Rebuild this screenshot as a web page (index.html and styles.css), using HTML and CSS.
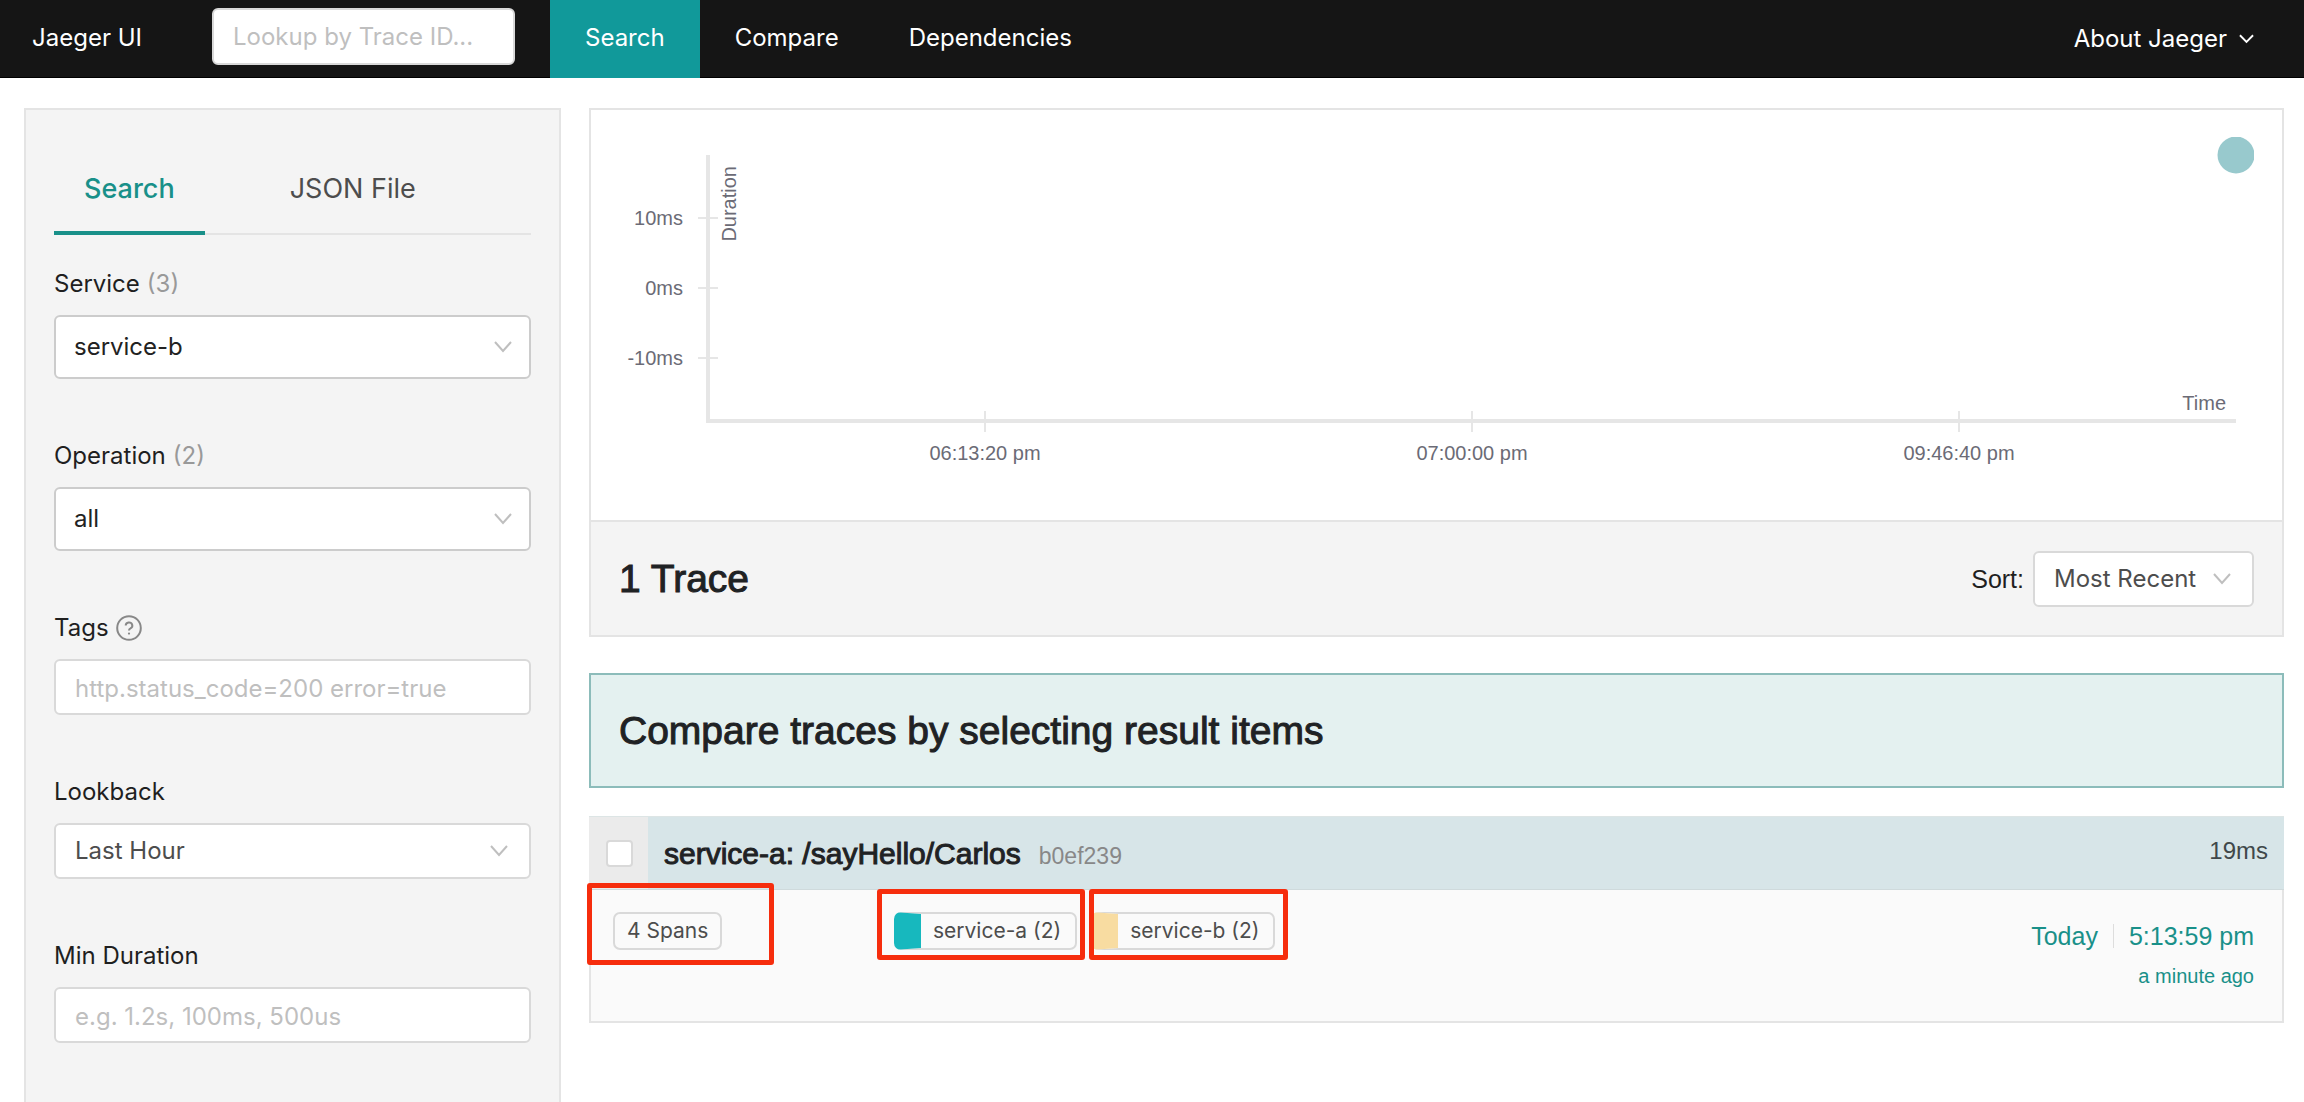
FILE: index.html
```html
<!DOCTYPE html>
<html lang="en">
<head>
<meta charset="utf-8">
<meta name="viewport" content="width=device-width, initial-scale=1">
<title>Jaeger UI</title>
<link rel="stylesheet" href="styles.css">
</head>
<body>
<header class="topbar">
  <a class="brand" href="#">Jaeger UI</a>
  <input class="lookup" type="text" placeholder="Lookup by Trace ID..." aria-label="Lookup by Trace ID">
  <nav class="nav">
    <a class="nav-item active" href="#">Search</a>
    <a class="nav-item" href="#">Compare</a>
    <a class="nav-item" href="#">Dependencies</a>
  </nav>
  <button class="about" type="button">About Jaeger
    <svg class="about-chevron" viewBox="0 0 16 10" aria-hidden="true"><path d="M1 1l7 7 7-7"/></svg>
  </button>
</header>

<div class="page">
  <aside class="sidebar">
    <div class="tabs" role="tablist">
      <button class="tab active" type="button" role="tab" aria-selected="true">Search</button>
      <button class="tab" type="button" role="tab" aria-selected="false">JSON File</button>
    </div>
    <form class="form">
      <div class="field">
        <label for="service">Service <span class="count">(3)</span></label>
        <div class="select tall">
          <select id="service"><option>service-b</option></select>
          <svg class="chevron" viewBox="0 0 18 12" aria-hidden="true"><path d="M1 1l8 9 8-9"/></svg>
        </div>
      </div>
      <div class="field">
        <label for="operation">Operation <span class="count">(2)</span></label>
        <div class="select tall">
          <select id="operation"><option>all</option></select>
          <svg class="chevron" viewBox="0 0 18 12" aria-hidden="true"><path d="M1 1l8 9 8-9"/></svg>
        </div>
      </div>
      <div class="field">
        <label for="tags">Tags
          <svg class="help" viewBox="0 0 26 26" aria-hidden="true"><circle cx="13" cy="13" r="11.8"/><path d="M9.7 10.6a3.3 3.1 0 1 1 4.8 2.8c-1 .5-1.5 1-1.5 2.2"/><circle class="help-dot" cx="13" cy="18.6" r="1.1"/></svg>
        </label>
        <input class="text" id="tags" type="text" placeholder="http.status_code=200 error=true">
      </div>
      <div class="field">
        <label for="lookback">Lookback</label>
        <div class="select">
          <select id="lookback"><option>Last Hour</option></select>
          <svg class="chevron" viewBox="0 0 18 12" aria-hidden="true"><path d="M1 1l8 9 8-9"/></svg>
        </div>
      </div>
      <div class="field">
        <label for="min">Min Duration</label>
        <input class="text" id="min" type="text" placeholder="e.g. 1.2s, 100ms, 500us">
      </div>
    </form>
  </aside>

  <main class="results">
    <section class="overview">
      <svg class="chart" viewBox="0 0 1691 410" role="img" aria-label="Trace duration over time">
        <clipPath id="plot"><rect x="0" y="27" width="1663" height="383"/></clipPath>
        <path class="tick" d="M107 108h20M107 178h20M107 248h20M394 301v21M881 301v21M1368 301v21"/>
        <path class="axis" d="M117 45V311H1645"/>
        <g class="label end">
          <text x="92" y="115">10ms</text>
          <text x="92" y="185">0ms</text>
          <text x="92" y="255">-10ms</text>
          <text x="1635" y="300">Time</text>
          <text transform="translate(145 56) rotate(-90)">Duration</text>
        </g>
        <g class="label middle">
          <text x="394" y="350">06:13:20 pm</text>
          <text x="881" y="350">07:00:00 pm</text>
          <text x="1368" y="350">09:46:40 pm</text>
        </g>
        <circle class="dot" cx="1645" cy="45" r="18.5" clip-path="url(#plot)"/>
      </svg>
      <div class="summary">
        <h2>1 Trace</h2>
        <div class="sort">
          <label for="sort">Sort:</label>
          <div class="select">
            <select id="sort"><option>Most Recent</option></select>
            <svg class="chevron" viewBox="0 0 18 12" aria-hidden="true"><path d="M1 1l8 9 8-9"/></svg>
          </div>
        </div>
      </div>
    </section>

    <section class="compare"><h2>Compare traces by selecting result items</h2></section>

    <article class="trace">
      <div class="trace-head">
        <label class="pick"><input type="checkbox" aria-label="Select trace b0ef239"></label>
        <a class="trace-link" href="#">
          <h3>service-a: /sayHello/Carlos</h3>
          <span class="trace-id">b0ef239</span>
          <span class="duration">19ms</span>
        </a>
      </div>
      <div class="trace-body">
        <div class="spans"><span class="tag">4 Spans</span></div>
        <div class="services">
          <span class="tag service service-a">service-a (2)</span>
          <span class="tag service service-b">service-b (2)</span>
        </div>
        <div class="when">
          <div class="when-line"><span class="day">Today</span><span>5:13:59 pm</span></div>
          <div class="ago">a minute ago</div>
        </div>
      </div>
      <div class="mark mark-spans"></div>
      <div class="mark mark-a"></div>
      <div class="mark mark-b"></div>
    </article>
  </main>
</div>
</body>
</html>
```
FILE: styles.css
```css
* { box-sizing: border-box; }

body {
  margin: 0;
  min-height: 100vh;
  display: flex;
  flex-direction: column;
  background: #fff;
  color: #1f1f1f;
  font: 24px/36px Inter, "Liberation Sans", sans-serif;
}

h2, h3 {
  margin: 0;
  color: #1f2224;
  font-family: "Liberation Sans", Arial, sans-serif;
  font-weight: 400;
  -webkit-text-stroke: 1px #1f2224;
}
h2 { font-size: 39px; line-height: 48px; }
h3 { font-size: 30px; line-height: 36px; }

input, select, button { font: inherit; margin: 0; }
a { color: inherit; text-decoration: none; }

/* Top bar */
.topbar {
  display: flex;
  align-items: stretch;
  height: 78px;
  padding: 0 50px 0 32px;
  background: #151515;
  border-bottom: 1px solid #000;
  color: #fff;
}
.brand { width: 180px; line-height: 75px; }
.lookup {
  width: 303px;
  height: 57px;
  margin: 8px 35px 0 0;
  padding: 0 19px;
  border: 2px solid #d9d9d9;
  border-radius: 6px;
  background: #fff;
}
::placeholder { color: #bfbfbf; opacity: 1; }
.nav { display: flex; flex: 1; }
.nav-item { padding: 0 35px; line-height: 75px; }
.nav-item.active { background: #11999a; margin-bottom: -1px; }
.about {
  display: flex;
  align-items: center;
  gap: 12px;
  padding: 0;
  border: 0;
  background: none;
  color: #fff;
}
.about-chevron { width: 15px; height: 10px; fill: none; stroke: #fff; stroke-width: 2; }

/* Page columns */
.page {
  flex: 1;
  display: grid;
  grid-template-columns: 537px minmax(0, 1fr);
  gap: 28px;
  padding: 30px 20px 0 24px;
}
.sidebar {
  padding: 28px;
  border: 2px solid #e4e4e4;
  border-bottom: 0;
  background: #f4f4f4;
}
.tabs { display: flex; gap: 55px; box-shadow: inset 0 -2px #e4e4e4; margin-bottom: 30px; }
.tab {
  padding: 31px 30px 22px;
  border: 0;
  border-bottom: 4px solid transparent;
  background: none;
  color: #4d4d4d;
  font-size: 27px;
  line-height: 40px;
}
.tab.active { color: #199089; border-color: #199089; font-weight: 500; }

.form { display: flex; flex-direction: column; gap: 58px; }
.field { display: flex; flex-direction: column; gap: 12px; }
.field label { display: flex; align-items: center; gap: 7px; line-height: 38px; }
.count { color: #999; }
.help { width: 26px; height: 26px; fill: none; stroke: #888; stroke-width: 2; }
.help-dot { fill: #888; stroke: none; }

.text, .select select {
  width: 100%;
  height: 56px;
  padding: 0 19px;
  border: 2px solid #d9d9d9;
  border-radius: 6px;
  background: #fff;
  color: #4d4d4d;
}
.text { padding-top: 2px; }
.select { display: grid; align-items: center; }
.select > * { grid-area: 1 / 1; }
.select select { appearance: none; }
.select.tall select { height: 64px; padding: 0 18px; border-color: #ccc; color: #222; }
.chevron {
  justify-self: end;
  width: 18px;
  height: 12px;
  margin-right: 23px;
  fill: none;
  stroke: #bfbfbf;
  stroke-width: 2;
  pointer-events: none;
}
.tall .chevron { margin-right: 19px; }

/* Overview */
.overview { border: 2px solid #e4e4e4; margin-bottom: 36px; }
.chart { display: block; width: 100%; height: auto; }
.axis { fill: none; stroke: #e6e6e6; stroke-width: 4; }
.tick { fill: none; stroke: #e6e6e6; stroke-width: 2; }
.label { fill: #6b6b76; font: 20px "Liberation Sans", Arial, sans-serif; }
.end { text-anchor: end; }
.middle { text-anchor: middle; }
.dot { fill: #98c9cd; }

.summary {
  display: flex;
  align-items: center;
  justify-content: space-between;
  height: 115px;
  padding: 0 28px;
  border-top: 2px solid #e4e4e4;
  background: #f4f4f4;
}
.sort { display: flex; align-items: center; gap: 9px; color: #1f1f1f; }
.sort label { font: 25px/36px "Liberation Sans", Arial, sans-serif; }
.sort .select { width: 221px; }

.compare {
  margin-bottom: 28px;
  padding: 32px 28px 31px;
  border: 2px solid #8cbcba;
  background: #e4f1f0;
}

/* Trace result */
.trace { position: relative; border: 2px solid #e4e4e4; border-top: 0; background: #fafafa; }
.trace-head {
  display: flex;
  height: 74px;
  margin: 0 -2px;
  border-bottom: 1px solid #cfdadc;
  background: #d7e5e8;
  border-top: 1px solid #dde5e5;
}
.pick {
  display: flex;
  align-items: center;
  width: 59px;
  padding-left: 17px;
  background: #ebebeb;
}
.pick input {
  appearance: none;
  width: 27px;
  height: 27px;
  border: 2px solid #d9d9d9;
  border-radius: 4px;
  background: #fff;
}
.trace-link {
  flex: 1;
  display: flex;
  align-items: baseline;
  gap: 18px;
  padding: 19px 16px 0;
  font-family: "Liberation Sans", Arial, sans-serif;
}
.trace-id { color: #888; font-size: 23px; }
.duration { margin-left: auto; align-self: flex-start; line-height: 30px; color: #40484a; }

.trace-body { display: flex; height: 131px; padding: 0 28px 0 22px; }
.spans { width: 281px; padding-top: 22px; }
.services { display: flex; align-items: flex-start; gap: 14px; padding-top: 22px; flex: 1; }
.tag {
  display: inline-block;
  padding: 0 12px;
  border: 2px solid #d9d9d9;
  border-radius: 7px;
  color: #4d4d4d;
  font-size: 21px;
  line-height: 34px;
}
.spans .tag { vertical-align: top; }
.service { border-left-width: 27px; padding: 0 14px 0 12px; }
.service-a { border-left-color: #17b8be; }
.service-b { border-left-color: #f8dca1; }
.when {
  padding-top: 26px;
  color: #199089;
  font: 25px/40px "Liberation Sans", Arial, sans-serif;
  text-align: right;
}
.when-line { display: flex; align-items: center; justify-content: flex-end; }
.day {
  padding-right: 15px;
  margin-right: 15px;
  border-right: 1px solid #ddd;
  line-height: 24px;
}
.ago { font-size: 20px; }

/* Highlight frames over the tags */
.mark { position: absolute; border: 5px solid #f62d0d; border-radius: 3px; pointer-events: none; }
.mark-spans { left: -4px; top: 67px; width: 187px; height: 82px; }
.mark-a { left: 286px; top: 73px; width: 208px; height: 71px; }
.mark-b { left: 498px; top: 73px; width: 199px; height: 71px; }
```
